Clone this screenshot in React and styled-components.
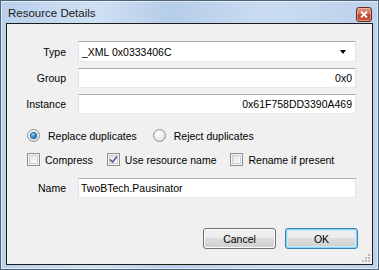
import React from 'react';
import styled, { createGlobalStyle } from 'styled-components';

const GlobalStyle = createGlobalStyle`
  html, body {
    margin: 0;
    padding: 0;
    background: #ffffff;
  }
  body {
    font-family: "Liberation Sans", Arial, sans-serif;
    font-size: 10.5px;
    color: #000;
  }
`;

const Window = styled.div`
  box-sizing: border-box;
  width: 379px;
  height: 270px;
  border: 1px solid #4f6479;
  background: linear-gradient(to right, #b9d0ea 0%, #cfe0f3 25%, #b6cde8 45%, #c9dcf1 70%, #bcd2eb 100%);
  box-shadow: inset 0 0 0 1px rgba(255, 255, 255, 0.55);
  display: flex;
  flex-direction: column;
  padding: 0 5px 4px 5px;
`;

const TitleBar = styled.div`
  height: 22px;
  display: flex;
  align-items: center;
  justify-content: space-between;
  padding-left: 2px;
`;

const Title = styled.span`
  font-size: 11.5px;
  color: #1a1a1a;
  margin-top: 2px;
`;

const CloseButton = styled.div`
  box-sizing: border-box;
  width: 16px;
  height: 15px;
  margin-right: 1px;
  margin-top: 4px;
  border: 1px solid #6d2a1c;
  border-radius: 3px;
  background: linear-gradient(#e39a86 0%, #d0674e 45%, #b8402a 55%, #c8573d 100%);
  box-shadow: inset 0 0 0 1px rgba(255, 220, 210, 0.45);
  display: flex;
  align-items: center;
  justify-content: center;
`;

const Client = styled.div`
  flex: 1;
  box-sizing: border-box;
  border: 1px solid #1b1b1b;
  background: #f0f0f0;
  display: flex;
  flex-direction: column;
  position: relative;
`;

const FieldGrid = styled.div`
  display: grid;
  grid-template-columns: 59px 278px;
  column-gap: 12px;
  row-gap: 6px;
  padding-top: 17px;
  align-items: center;
`;

const Label = styled.label`
  text-align: right;
`;

const TextBox = styled.div`
  box-sizing: border-box;
  height: 20px;
  background: #fff;
  border: 1px solid #e2e3ea;
  border-top-color: #abadb3;
  border-bottom-color: #e3e9ef;
  display: flex;
  align-items: center;
  justify-content: ${p => (p.$right ? 'flex-end' : 'flex-start')};
  padding: 0 3px 0 2px;
  white-space: nowrap;
`;

const Combo = styled(TextBox)`
  height: 21px;
  justify-content: space-between;
  padding: 0 9px 0 3px;
`;

const Arrow = styled.span`
  width: 0;
  height: 0;
  border-left: 3.5px solid transparent;
  border-right: 3.5px solid transparent;
  border-top: 4px solid #000;
  margin-top: 1px;
`;

const OptionRow = styled.div`
  display: flex;
  align-items: center;
  gap: ${p => p.$gap}px;
  padding-left: 20px;
  margin-top: ${p => p.$top}px;
  height: 13px;
`;

const Option = styled.div`
  display: flex;
  align-items: center;
  gap: ${p => p.$gap}px;
  white-space: nowrap;
`;

const Radio = styled.span`
  box-sizing: border-box;
  width: 13px;
  height: 13px;
  border-radius: 50%;
  border: 1px solid #8e8f8f;
  background: radial-gradient(circle at 40% 35%, #ffffff 0%, #f0f0f0 40%, #d4d4d4 100%);
  display: flex;
  align-items: center;
  justify-content: center;

  &::after {
    content: '';
    display: ${p => (p.$checked ? 'block' : 'none')};
    width: 5px;
    height: 5px;
    border-radius: 50%;
    background: radial-gradient(circle at 35% 30%, #8ad3f7 0%, #2f85c4 55%, #0d4c88 100%);
    box-shadow: 0 0 0 1px #1e5c92;
  }
`;

const Check = styled.span`
  box-sizing: border-box;
  width: 13px;
  height: 13px;
  border: 1px solid #8e8f8f;
  background: linear-gradient(135deg, #dcdcdc 0%, #f4f4f4 60%, #ffffff 100%);
  box-shadow: inset 0 0 0 1px #f4f4f4, inset 0 0 0 2px #cfcfcf;
  display: flex;
  align-items: center;
  justify-content: center;
`;

const NameRow = styled.div`
  display: grid;
  grid-template-columns: 59px 278px;
  column-gap: 12px;
  align-items: center;
  margin-top: 12px;
`;

const ButtonRow = styled.div`
  margin-top: auto;
  display: flex;
  justify-content: flex-end;
  gap: 9px;
  padding: 0 14px 15px 0;
`;

const Button = styled.div`
  box-sizing: border-box;
  width: 73px;
  height: 21px;
  border-radius: 3px;
  border: 1px solid ${p => (p.$default ? '#3c7fb1' : '#707070')};
  background: linear-gradient(#f2f2f2 0%, #ebebeb 50%, #dddddd 50%, #cfcfcf 100%);
  box-shadow: ${p =>
    p.$default
      ? 'inset 0 0 0 1px #8fd3f5, inset 0 0 0 2px #c8ebfb'
      : 'inset 0 0 0 1px #fcfcfc'};
  display: flex;
  align-items: center;
  justify-content: center;
`;

const Grip = styled.svg`
  position: absolute;
  right: 2px;
  bottom: 2px;
`;

const CheckMark = () => (
  <svg width="9" height="9" viewBox="0 0 9 9">
    <path d="M1 4.5 L3.5 7 L8 1.5" fill="none" stroke="#4a5f97" strokeWidth="1.6" />
  </svg>
);

const App = () => (
  <>
    <GlobalStyle />
    <Window>
      <TitleBar>
        <Title>Resource Details</Title>
        <CloseButton>
          <svg width="8" height="7" viewBox="0 0 8 7">
            <path d="M1 0.5 L7 6.5 M7 0.5 L1 6.5" stroke="#ffffff" strokeWidth="1.8" />
          </svg>
        </CloseButton>
      </TitleBar>
      <Client>
        <FieldGrid>
          <Label>Type</Label>
          <Combo>
            <span>_XML 0x0333406C</span>
            <Arrow />
          </Combo>
          <Label>Group</Label>
          <TextBox $right>0x0</TextBox>
          <Label>Instance</Label>
          <TextBox $right>0x61F758DD3390A469</TextBox>
        </FieldGrid>

        <OptionRow $top={15} $gap={16}>
          <Option $gap={8}>
            <Radio $checked />
            <span>Replace duplicates</span>
          </Option>
          <Option $gap={8}>
            <Radio />
            <span>Reject duplicates</span>
          </Option>
        </OptionRow>

        <OptionRow $top={11} $gap={14}>
          <Option $gap={5}>
            <Check />
            <span>Compress</span>
          </Option>
          <Option $gap={5}>
            <Check>
              <CheckMark />
            </Check>
            <span>Use resource name</span>
          </Option>
          <Option $gap={5}>
            <Check />
            <span>Rename if present</span>
          </Option>
        </OptionRow>

        <NameRow>
          <Label>Name</Label>
          <TextBox>TwoBTech.Pausinator</TextBox>
        </NameRow>

        <ButtonRow>
          <Button>Cancel</Button>
          <Button $default>OK</Button>
        </ButtonRow>

        <Grip width="8" height="8" viewBox="0 0 8 8">
          {[[6, 0], [6, 3], [3, 3], [6, 6], [3, 6], [0, 6]].map(([x, y]) => (
            <rect key={`${x}-${y}`} x={x} y={y} width="2" height="2" fill="#b9b9b9" />
          ))}
        </Grip>
      </Client>
    </Window>
  </>
);

export default App;
